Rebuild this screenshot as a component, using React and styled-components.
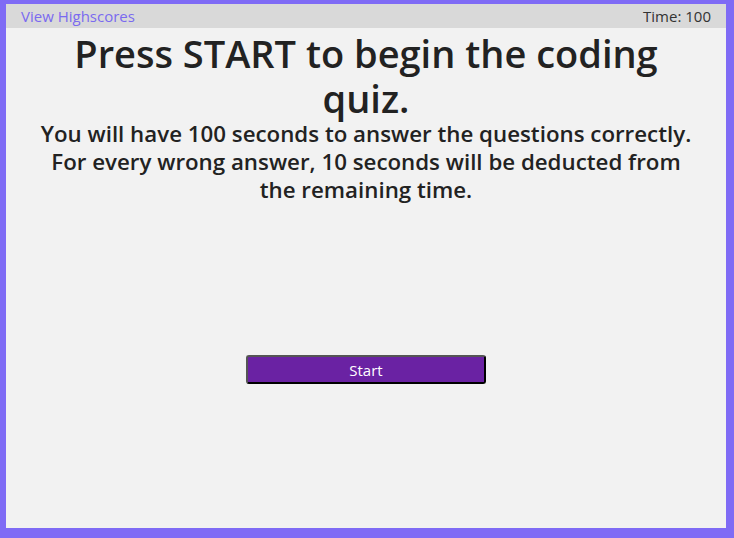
import * as React from 'react';
import styled, { createGlobalStyle } from 'styled-components';

const GlobalStyle = createGlobalStyle`
  html, body {
    margin: 0;
    height: 100%;
    background: #7f6bf5;
  }
  #root {
    height: 100%;
  }
`;

const Frame = styled.div`
  box-sizing: border-box;
  height: 100%;
  padding: 4px 8px 10px 6px;
`;

const Screen = styled.main`
  height: 100%;
  display: flex;
  flex-direction: column;
  background: #f2f2f2;
  font-family: 'Open Sans', 'Noto Sans', sans-serif;
  color: #222;
`;

const TopBar = styled.header`
  height: 24px;
  flex: none;
  display: flex;
  align-items: center;
  justify-content: space-between;
  padding: 0 15px;
  background: #d9d9d9;
  font-size: 15px;
`;

const HighscoreLink = styled.a`
  color: #7a6af0;
  text-decoration: none;
  cursor: pointer;
`;

const Timer = styled.span`
  color: #333;
`;

const Intro = styled.section`
  display: flex;
  flex-direction: column;
  align-items: center;
  text-align: center;
`;

const Title = styled.h1`
  width: 640px;
  margin: 3px 0 0;
  font-size: 38px;
  font-weight: 600;
  line-height: 45px;
`;

const Rules = styled.p`
  width: 664px;
  margin: -1px 0 0;
  font-size: 22.3px;
  font-weight: 600;
  line-height: 28px;
`;

const StartButton = styled.button`
  box-sizing: border-box;
  width: 240px;
  height: 29px;
  margin-top: 151px;
  border: 2px outset #555;
  border-radius: 3px;
  background: #6a22a3;
  color: #fff;
  font-family: inherit;
  font-size: 15px;
  cursor: pointer;
`;

export default function App() {
  return (
    <>
      <GlobalStyle />
      <Frame>
        <Screen>
          <TopBar>
            <HighscoreLink>View Highscores</HighscoreLink>
            <Timer>Time: 100</Timer>
          </TopBar>
          <Intro>
            <Title>Press START to begin the coding quiz.</Title>
            <Rules>
              You will have 100 seconds to answer the questions correctly. For every wrong
              answer, 10 seconds will be deducted from the remaining time.
            </Rules>
            <StartButton>Start</StartButton>
          </Intro>
        </Screen>
      </Frame>
    </>
  );
}
